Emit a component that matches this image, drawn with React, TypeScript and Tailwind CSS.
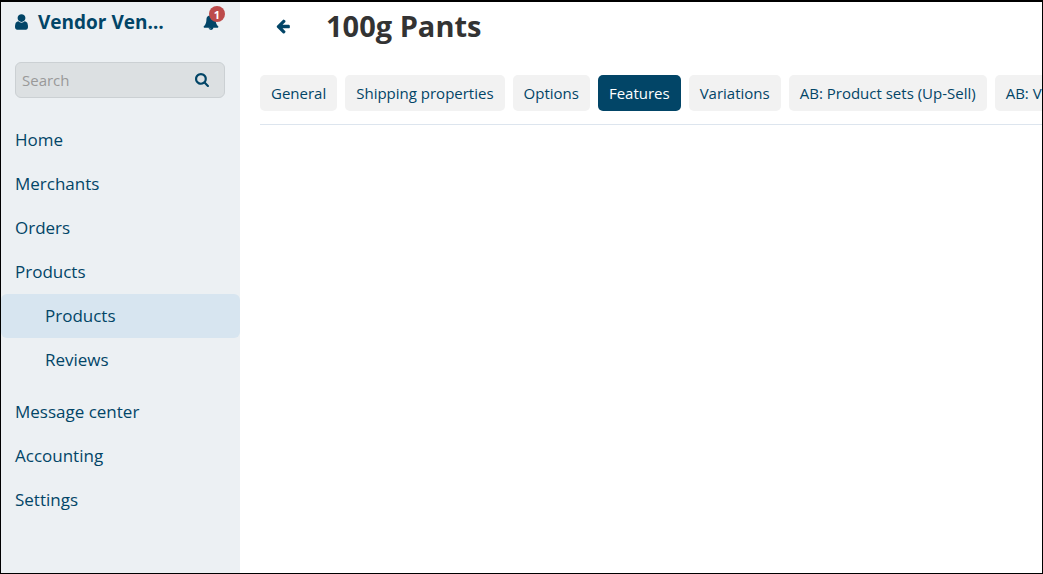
import React from "react";

type IconProps = { className: string; viewBox: string; d: string };

function Icon({ className, viewBox, d }: IconProps) {
  return (
    <svg className={className} viewBox={viewBox} fill="currentColor" aria-hidden="true">
      <path d={d} />
    </svg>
  );
}

const USER =
  "M1280 1399q0 109-62.5 187t-150.5 78h-854q-88 0-150.5-78t-62.5-187q0-85 8.500-160.500t31.500-152 58.500-131 94-89 134.500-34.500q131 128 313 128t313-128q76 0 134.500 34.500t94 89 58.500 131 31.500 152 8.500 160.500zm-256-887q0 159-112.500 271.500t-271.500 112.500-271.500-112.500-112.500-271.500 112.500-271.500 271.500-112.500 271.500 112.500 112.500 271.500z";
const BELL =
  "M912 1696q0-16-16-16-59 0-101.500-42.500t-42.500-101.500q0-16-16-16t-16 16q0 73 51.500 124.500t124.500 51.500q16 0 16-16zm816-288q0 52-38 90t-90 38h-448q0 106-75 181t-181 75-181-75-75-181h-448q-52 0-90-38t-38-90q50-42 91-88t85-119.500 74.500-158.500 50-206 19.500-260q0-152 117-282.500t307-158.500q-8-19-8-39 0-40 28-68t68-28 68 28 28 68q0 20-8 39 190 28 307 158.500t117 282.500q0 139 19.500 260t50 206 74.500 158.500 85 119.500 91 88z";
const SEARCH =
  "M1216 832q0-185-131.500-316.500t-316.500-131.500-316.500 131.500-131.500 316.500 131.500 316.500 316.500 131.500 316.500-131.500 131.500-316.500zm512 832q0 52-38 90t-90 38q-54 0-90-38l-343-342q-179 124-399 124-143 0-273.500-55.500t-225-150-150-225-55.500-273.500 55.500-273.500 150-225 225-150 273.500-55.500 273.500 55.500 225 150 150 225 55.500 273.500q0 220-124 399l343 343q37 37 37 90z";
const ARROW_LEFT =
  "M1664 896v128q0 53-32.500 90.500t-84.500 37.500h-704l293 294q38 36 38 90t-38 90l-75 76q-37 37-90 37-52 0-91-37l-651-652q-37-37-37-90 0-52 37-91l651-650q38-38 91-38 52 0 90 38l75 74q38 38 38 91t-38 91l-293 293h704q52 0 84.500 37.500t32.500 90.500z";

type NavItem = { label: string; children?: { label: string; active?: boolean }[] };

const NAV: NavItem[] = [
  { label: "Home" },
  { label: "Merchants" },
  { label: "Orders" },
  { label: "Products", children: [{ label: "Products", active: true }, { label: "Reviews" }] },
  { label: "Message center" },
  { label: "Accounting" },
  { label: "Settings" },
];

const TABS = [
  "General",
  "Shipping properties",
  "Options",
  "Features",
  "Variations",
  "AB: Product sets (Up-Sell)",
  "AB: V",
];

function Sidebar() {
  return (
    <aside className="w-[239px] shrink-0 bg-[#ecf0f3]">
      <div className="flex h-10 items-center pr-[15px] pl-[14px]">
        <a href="#account" className="flex min-w-0 items-center gap-[10px] text-[19px] font-bold">
          <Icon className="h-4 w-[13px] shrink-0" viewBox="0 128 1280 1536" d={USER} />
          <span>Vendor Ven…</span>
        </a>
        <button type="button" aria-label="Notifications" className="relative ml-auto flex h-6 w-[22px] items-center">
          <Icon className="h-4 w-4" viewBox="0 0 1792 1792" d={BELL} />
          <span className="absolute -top-1 right-0 flex h-4 w-4 items-center justify-center rounded-full bg-[#bd4b4b] text-[11px] leading-none font-bold text-white">
            1
          </span>
        </button>
      </div>

      <form role="search" className="mr-[15px] ml-[14px] mt-5 flex h-9 rounded-md border border-[#cbd0d3] bg-[#dce0e2]">
        <input
          type="text"
          aria-label="Search"
          placeholder="Search"
          className="min-w-0 flex-1 bg-transparent pl-[6px] text-[15px] outline-none placeholder:text-[#999999]"
        />
        <button type="button" aria-label="Run search" className="flex w-11 items-center justify-center">
          <Icon className="h-[14px] w-[14px]" viewBox="64 128 1664 1664" d={SEARCH} />
        </button>
      </form>

      <nav className="mt-5 text-[17px]">
        <ul>
          {NAV.map((item) => (
            <li key={item.label}>
              <a href="#section" className="flex h-11 items-center px-[14px]">
                {item.label}
              </a>
              {item.children && (
                <ul className="mb-2">
                  {item.children.map((child) => (
                    <li key={child.label}>
                      <a
                        href="#subsection"
                        className={
                          child.active
                            ? "flex h-11 items-center rounded-md bg-[#d7e5f0] pl-11"
                            : "flex h-11 items-center rounded-md pl-11"
                        }
                      >
                        {child.label}
                      </a>
                    </li>
                  ))}
                </ul>
              )}
            </li>
          ))}
        </ul>
      </nav>
    </aside>
  );
}

export default function App() {
  return (
    <div className="flex min-h-screen border border-t-2 border-black bg-white font-['Open_Sans','Noto_Sans',sans-serif] text-[#024567]">
      <Sidebar />
      <main className="min-w-0 flex-1 pl-5">
        <header className="flex h-12 items-center">
          <a href="#back" aria-label="Back" className="flex w-[46px] justify-center">
            <Icon className="h-4 w-4" viewBox="0 0 1792 1792" d={ARROW_LEFT} />
          </a>
          <h1 className="ml-5 text-[29px] font-bold text-[#333333]">100g Pants</h1>
        </header>
        <div className="mt-[25px] overflow-hidden border-b border-[#dde5ee] pb-[13px]">
          <div className="flex gap-2">
            {TABS.map((tab) => (
              <button
                key={tab}
                type="button"
                className={
                  tab === "Features"
                    ? "h-9 shrink-0 rounded-[5px] bg-[#024567] px-[11px] text-[15px] whitespace-nowrap text-white"
                    : "h-9 shrink-0 rounded-[5px] bg-[#f2f2f2] px-[11px] text-[15px] whitespace-nowrap"
                }
              >
                {tab}
              </button>
            ))}
          </div>
        </div>
      </main>
    </div>
  );
}
